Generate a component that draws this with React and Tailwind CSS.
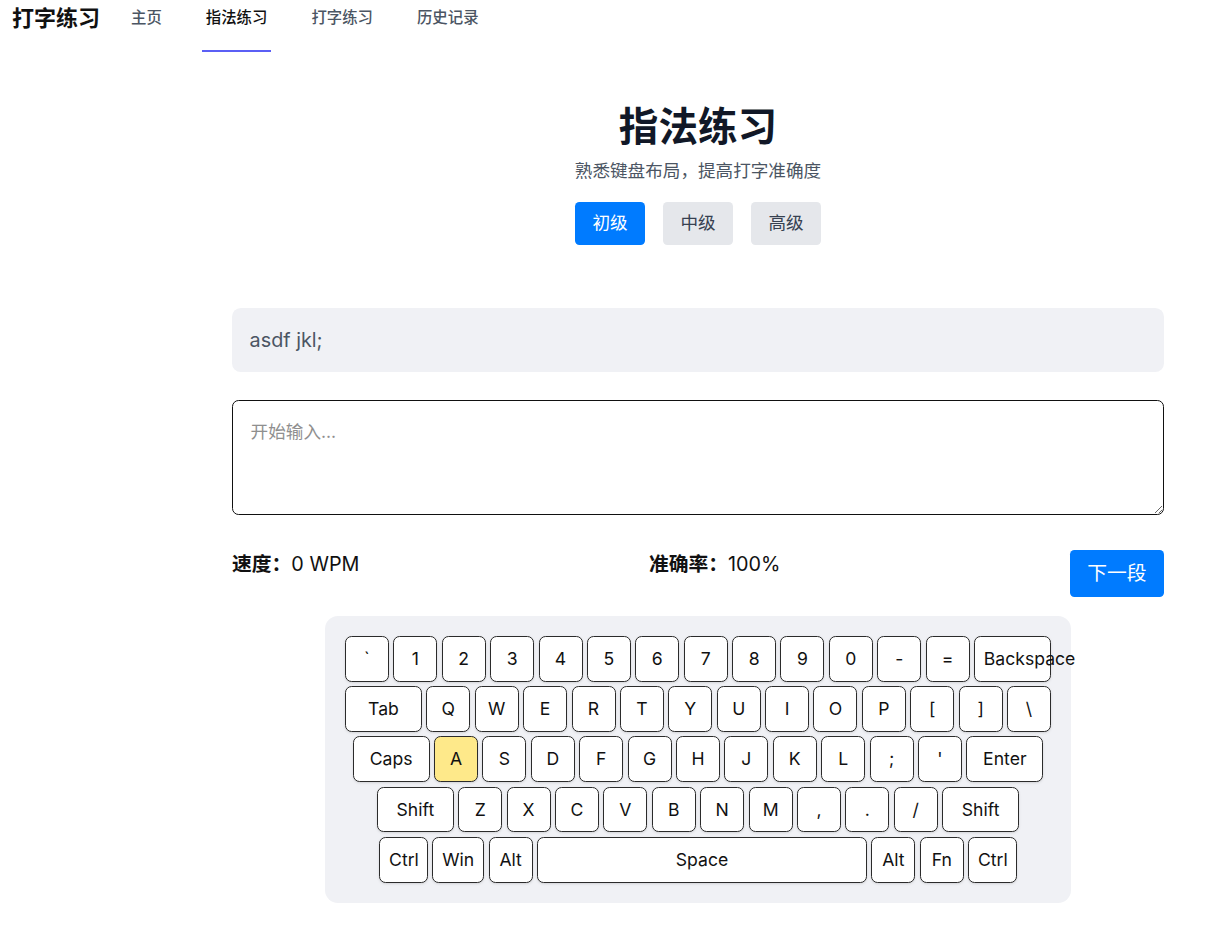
import React, { useState } from 'react';

const FONT = { fontFamily: 'Inter, "Noto Sans CJK SC", sans-serif' };

const ROWS = [
  ['`', '1', '2', '3', '4', '5', '6', '7', '8', '9', '0', '-', '=', { k: 'Backspace', w: 'w-[77px]' }],
  [{ k: 'Tab', w: 'w-[77px]' }, 'Q', 'W', 'E', 'R', 'T', 'Y', 'U', 'I', 'O', 'P', '[', ']', '\\'],
  [{ k: 'Caps', w: 'w-[77px]' }, 'A', 'S', 'D', 'F', 'G', 'H', 'J', 'K', 'L', ';', "'", { k: 'Enter', w: 'w-[77px]' }],
  [{ k: 'Shift', w: 'w-[77px]' }, 'Z', 'X', 'C', 'V', 'B', 'N', 'M', ',', '.', '/', { k: 'Shift', w: 'w-[77px]' }],
  [
    { k: 'Ctrl', w: 'w-[48.5px]' },
    { k: 'Win', w: 'w-[52px]' },
    { k: 'Alt', w: 'w-[44px]' },
    { k: 'Space', w: 'w-[330px]' },
    { k: 'Alt', w: 'w-[44px]' },
    { k: 'Fn', w: 'w-[44px]' },
    { k: 'Ctrl', w: 'w-[48.5px]' },
  ],
];

function Key({ label, width, active }) {
  return (
    <div
      className={`${width} h-[45.8px] shrink-0 rounded-[6.6px] border border-[#2b2b2b] px-[8.8px] text-center leading-[43.8px] whitespace-nowrap text-[17.6px] text-[#111] shadow-sm ${
        active ? 'bg-[#fee98a]' : 'bg-white'
      }`}
    >
      {label}
    </div>
  );
}

export default function App() {
  const [level, setLevel] = useState('初级');
  const [input, setInput] = useState('');
  const target = 'a';

  return (
    <div className="min-h-screen bg-white text-[#111827]" style={FONT}>
      {/* Top nav */}
      <nav className="flex items-start h-[52px]">
        <div className="ml-[12px] mr-[27px] pt-[4px] text-[22px] leading-[28px] font-bold text-[#111]">打字练习</div>
        <div className="flex gap-[36px]">
          {['主页', '指法练习', '打字练习', '历史记录'].map((t) => (
            <a
              key={t}
              className={`px-[4px] pt-[7px] pb-[21px] text-[15.4px] leading-[22px] font-medium border-b-2 ${
                t === '指法练习' ? 'border-[#5b5ff5] text-[#111]' : 'border-transparent text-[#4b5563]'
              }`}
            >
              {t}
            </a>
          ))}
        </div>
      </nav>

      <main className="ml-[232px] w-[932px]">
        {/* Header */}
        <div className="flex flex-col items-center pt-[53px]">
          <h1 className="text-[39.6px] leading-[44px] font-bold text-[#111827]">指法练习</h1>
          <p className="mt-[9px] text-[17.6px] leading-[26px] text-[#4b5563]">熟悉键盘布局，提高打字准确度</p>
          <div className="mt-[18px] flex gap-[18px]">
            {['初级', '中级', '高级'].map((l) => (
              <button
                key={l}
                onClick={() => setLevel(l)}
                className={`w-[70px] h-[43px] rounded-[4.4px] text-[17.6px] ${
                  level === l ? 'bg-[#007bff] text-white' : 'bg-[#e5e7eb] text-[#374151]'
                }`}
              >
                {l}
              </button>
            ))}
          </div>
        </div>

        {/* Target text */}
        <div className="mt-[63px] rounded-[8.8px] bg-[#f0f1f5] p-[17.6px] text-[19.8px] leading-[28.8px] text-[#4b5563]">
          asdf jkl;
        </div>

        {/* Input */}
        <textarea
          value={input}
          onChange={(e) => setInput(e.target.value)}
          placeholder="开始输入..."
          className="mt-[28px] block w-full h-[115.5px] rounded-[6.6px] border border-[#111] p-[17.6px] text-[17.6px] leading-[26px] placeholder:text-[#8f8f8f] outline-none"
        />

        {/* Stats */}
        <div className="mt-[34.5px] flex items-start justify-between text-[19.8px] leading-[28px] text-[#111]">
          <div>
            <span className="font-bold">速度：</span>0 WPM
          </div>
          <div>
            <span className="font-bold">准确率：</span>100%
          </div>
          <button className="w-[94px] h-[47px] rounded-[4.4px] bg-[#007bff] text-white text-[19.8px]">下一段</button>
        </div>

        {/* Keyboard */}
        <div className="mx-auto mt-[19px] w-fit rounded-[13px] bg-[#f0f1f5] p-[20px] flex flex-col gap-[4.4px]">
          {ROWS.map((row, i) => (
            <div key={i} className="flex justify-center gap-[4.4px]">
              {row.map((item, j) => {
                const label = typeof item === 'string' ? item : item.k;
                const width = typeof item === 'string' ? 'w-[44px]' : item.w;
                return <Key key={j} label={label} width={width} active={label.toLowerCase() === target} />;
              })}
            </div>
          ))}
        </div>
      </main>
    </div>
  );
}
